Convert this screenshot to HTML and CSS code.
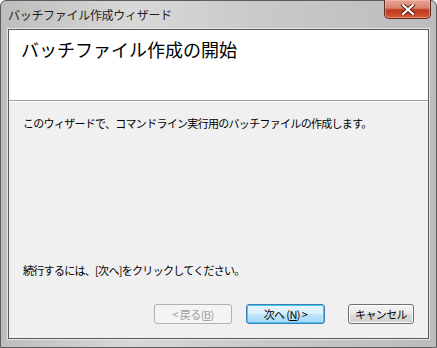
FILE: index.html
```html
<!DOCTYPE html>
<html lang="ja">
<head>
    <meta charset="UTF-8">
    <title>バッチファイル作成ウィザード</title>
    <link rel="stylesheet" href="styles.css">
</head>
<body>
    <div class="window">
        <div class="titlebar">
            <span class="title">バッチファイル作成ウィザード</span>
            <div class="close">
                <svg width="14" height="11" viewBox="0 0 14 11">
                    <path d="M2 1 L12 10 M12 1 L2 10" stroke="#5a1a10" stroke-width="4" stroke-linecap="square"/>
                    <path d="M2 1 L12 10 M12 1 L2 10" stroke="#ffffff" stroke-width="2.2" stroke-linecap="square"/>
                </svg>
            </div>
        </div>
        <div class="content">
            <div class="header">
                <h1>バッチファイル作成の開始</h1>
            </div>
            <div class="main">
                <p class="intro">このウィザードで、コマンドライン実行用のバッチファイルの作成します。</p>
                <p class="hint">続行するには、[次へ]をクリックしてください。</p>
                <div class="buttons">
                    <button class="btn back" disabled>&lt;&nbsp;戻る(<u>B</u>)</button>
                    <button class="btn next">次へ (<u>N</u>) &gt;</button>
                    <button class="btn cancel">キャンセル</button>
                </div>
            </div>
        </div>
    </div>
</body>
</html>
```

FILE: styles.css
```css
body {
    margin: 0;
    font-family: "Noto Sans CJK JP", "DejaVu Sans", sans-serif;
    background: #ffffff;
}

.window {
    width: 437px;
    height: 348px;
    box-sizing: border-box;
    padding: 0 7px 8px 7px;
    display: flex;
    flex-direction: column;
    background: linear-gradient(to right, #bdbdbd 0%, #d8d8d8 30%, #c9c9c9 60%, #bcbcbc 100%);
    border: 1px solid #5c5c5c;
    border-radius: 6px 6px 0 0;
}

.titlebar {
    height: 28px;
    display: flex;
    align-items: flex-start;
    justify-content: space-between;
}

.title {
    font-size: 12px;
    line-height: 14px;
    margin-top: 7px;
    color: #1e1e1e;
    letter-spacing: -0.3px;
}

.close {
    width: 45px;
    height: 18px;
    margin-right: -2px;
    margin-top: -1px;
    display: flex;
    align-items: center;
    justify-content: center;
    border: 1px solid #5e2b22;
    border-top: none;
    border-radius: 0 0 5px 5px;
    background: linear-gradient(to bottom, #e8a493 0%, #d5826c 45%, #c0391c 55%, #d25a37 100%);
    box-shadow: inset 0 0 0 1px rgba(255, 200, 180, 0.5);
}

.content {
    flex: 1;
    display: flex;
    flex-direction: column;
    background: #f0f0f0;
    border: 1px solid #5a5a5a;
    box-shadow: 0 0 0 1px #e6e6e6;
}

.header {
    height: 71px;
    background: #ffffff;
    border-bottom: 1px solid #a0a0a0;
    box-shadow: 0 1px 0 #ffffff;
    padding: 7px 12px 0;
    box-sizing: border-box;
}

.header h1 {
    margin: 0;
    font-size: 18px;
    font-weight: normal;
    line-height: 24px;
    color: #000000;
}

.main {
    flex: 1;
    display: flex;
    flex-direction: column;
    padding: 14px 0 0 14px;
}

.intro, .hint {
    margin: 0;
    font-size: 11px;
    line-height: 16px;
    letter-spacing: -0.7px;
    color: #000000;
}

.hint {
    margin-top: auto;
}

.buttons {
    display: flex;
    gap: 14px;
    margin: 26px 0 14px 131px;
}

.btn {
    height: 20px;
    padding: 0;
    font-family: "Noto Sans CJK JP", "DejaVu Sans", sans-serif;
    font-size: 11px;
    line-height: 16px;
    letter-spacing: -0.6px;
    color: #000000;
    border: 1px solid #707070;
    border-radius: 3px;
    background: linear-gradient(to bottom, #f2f2f2 0%, #ebebeb 50%, #dddddd 51%, #cfcfcf 100%);
    box-shadow: inset 0 0 0 1px #fcfcfc;
}

.back {
    width: 78px;
    color: #a0a0a0;
    border-color: #adb2b5;
    background: #f4f4f4;
    box-shadow: none;
}

.next {
    width: 79px;
    border-color: #3c7fb1;
    background: linear-gradient(to bottom, #eaf6fd 0%, #d9f0fc 50%, #bee6fd 51%, #a7d9f5 100%);
    box-shadow: inset 0 0 0 1px #48c4f5;
}

.cancel {
    width: 66px;
    margin-left: 9px;
}
```
